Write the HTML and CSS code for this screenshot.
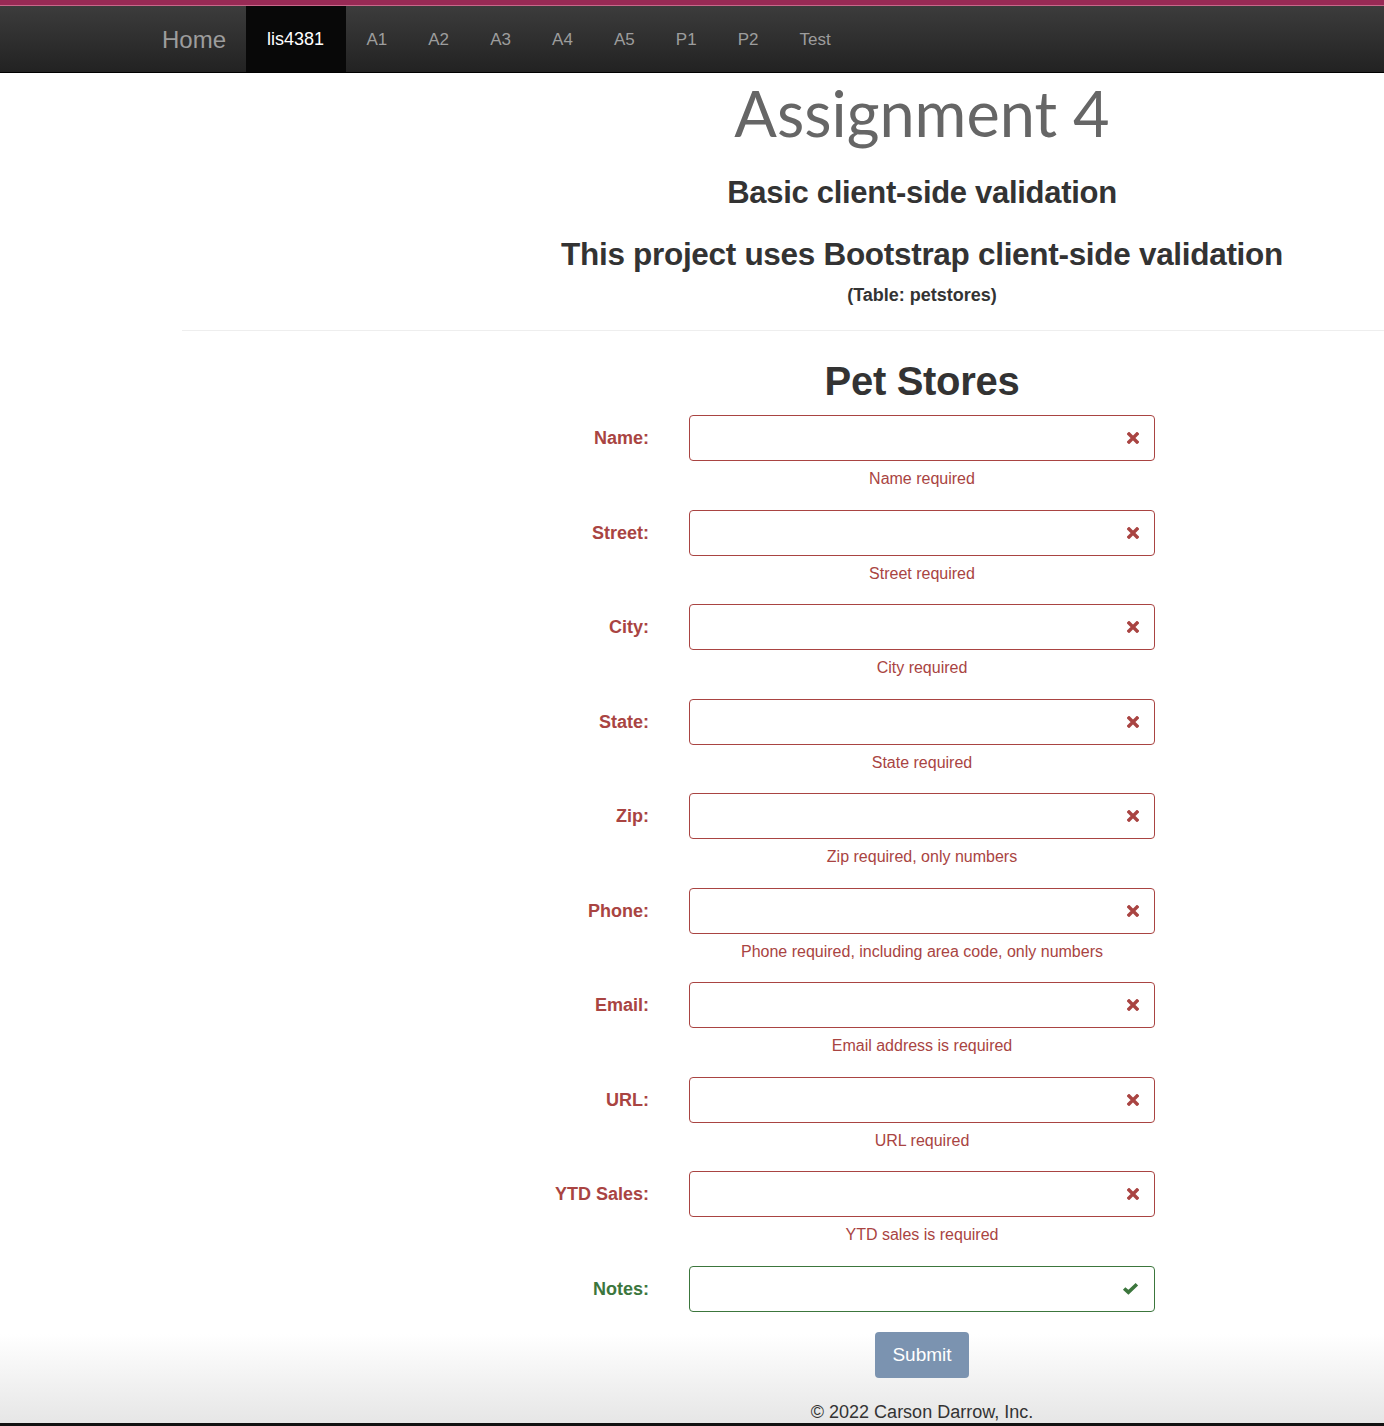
FILE: index.html
```html
<!DOCTYPE html>
<html lang="en">
<head>
<meta charset="utf-8">
<title>Assignment 4</title>
<link rel="stylesheet" href="styles.css">
</head>
<body>
<div class="topbar"></div>
<nav class="navbar">
  <a class="brand" href="#">Home</a>
  <ul class="nav">
    <li class="active"><a href="#">lis4381</a></li>
    <li><a href="#">A1</a></li>
    <li><a href="#">A2</a></li>
    <li><a href="#">A3</a></li>
    <li><a href="#">A4</a></li>
    <li><a href="#">A5</a></li>
    <li><a href="#">P1</a></li>
    <li><a href="#">P2</a></li>
    <li><a href="#">Test</a></li>
  </ul>
</nav>
<main class="page">
  <header class="intro">
    <h1 class="title">Assignment 4</h1>
    <h2 class="subtitle">Basic client-side validation</h2>
    <h3 class="lead">This project uses Bootstrap client-side validation</h3>
    <p class="table-note">(Table: petstores)</p>
  </header>
  <hr class="divider">
  <section class="form-section">
    <h2 class="form-title">Pet Stores</h2>
    <form class="form">
      <div class="row err"><label>Name:</label><div class="field"><span class="box"><span class="ico x"><svg viewBox="0 0 12 12"><path d="M2 2L10 10M10 2L2 10"/></svg></span></span><span class="help">Name required</span></div></div>
      <div class="row err"><label>Street:</label><div class="field"><span class="box"><span class="ico x"><svg viewBox="0 0 12 12"><path d="M2 2L10 10M10 2L2 10"/></svg></span></span><span class="help">Street required</span></div></div>
      <div class="row err"><label>City:</label><div class="field"><span class="box"><span class="ico x"><svg viewBox="0 0 12 12"><path d="M2 2L10 10M10 2L2 10"/></svg></span></span><span class="help">City required</span></div></div>
      <div class="row err"><label>State:</label><div class="field"><span class="box"><span class="ico x"><svg viewBox="0 0 12 12"><path d="M2 2L10 10M10 2L2 10"/></svg></span></span><span class="help">State required</span></div></div>
      <div class="row err"><label>Zip:</label><div class="field"><span class="box"><span class="ico x"><svg viewBox="0 0 12 12"><path d="M2 2L10 10M10 2L2 10"/></svg></span></span><span class="help">Zip required, only numbers</span></div></div>
      <div class="row err"><label>Phone:</label><div class="field"><span class="box"><span class="ico x"><svg viewBox="0 0 12 12"><path d="M2 2L10 10M10 2L2 10"/></svg></span></span><span class="help">Phone required, including area code, only numbers</span></div></div>
      <div class="row err"><label>Email:</label><div class="field"><span class="box"><span class="ico x"><svg viewBox="0 0 12 12"><path d="M2 2L10 10M10 2L2 10"/></svg></span></span><span class="help">Email address is required</span></div></div>
      <div class="row err"><label>URL:</label><div class="field"><span class="box"><span class="ico x"><svg viewBox="0 0 12 12"><path d="M2 2L10 10M10 2L2 10"/></svg></span></span><span class="help">URL required</span></div></div>
      <div class="row err"><label>YTD Sales:</label><div class="field"><span class="box"><span class="ico x"><svg viewBox="0 0 12 12"><path d="M2 2L10 10M10 2L2 10"/></svg></span></span><span class="help">YTD sales is required</span></div></div>
      <div class="row ok last"><label>Notes:</label><div class="field"><span class="box"><span class="ico v"><svg viewBox="0 0 16 12"><path d="M2 6L6 9.5L14 2"/></svg></span></span></div></div>
    </form>
  </section>
  <footer class="bottom">
    <div class="submit-wrap"><button class="submit" type="button">Submit</button></div>
    <p class="copy">© 2022 Carson Darrow, Inc.</p>
  </footer>
</main>
</body>
</html>
```

FILE: styles.css
```css
html, body {
  margin: 0;
  padding: 0;
}
body {
  font-family: "Liberation Sans", Arial, sans-serif;
  color: #333;
  background: #fff;
  overflow: hidden;
}
.topbar {
  height: 5px;
  background: #982a55;
  border-bottom: 1px solid #c9678a;
}
.navbar {
  height: 66px;
  background: linear-gradient(#3c3c3c, #222);
  border-bottom: 1px solid #000;
  display: flex;
  align-items: stretch;
  padding-left: 162px;
}
.brand {
  color: #9d9d9d;
  font-size: 24px;
  text-decoration: none;
  display: flex;
  align-items: center;
  padding-top: 1px;
  margin-right: 20px;
}
.nav {
  list-style: none;
  margin: 0;
  padding: 0;
  display: flex;
}
.nav li {
  display: flex;
}
.nav a {
  display: flex;
  align-items: center;
  padding: 1px 20.8px 0 20.3px;
  color: #9d9d9d;
  font-size: 17px;
  text-decoration: none;
}
.nav li.active a {
  background: #080808;
  color: #fff;
  font-size: 18px;
  padding: 1px 22px 0 21px;
}
.page {
  display: block;
}
.intro {
  margin-left: 460px;
  text-align: center;
}
.title {
  font-family: "Lato", "Open Sans", sans-serif;
  font-weight: 400;
  color: #666;
  font-size: 63px;
  line-height: 72px;
  margin: 4px 0 0;
  letter-spacing: 0;
}
.subtitle {
  font-size: 31px;
  font-weight: 600;
  margin: 24px 0 0;
  line-height: 40px;
  letter-spacing: -0.3px;
}
.lead {
  font-size: 31.5px;
  font-weight: 600;
  margin: 21px 0 0;
  line-height: 40px;
  letter-spacing: -0.3px;
}
.table-note {
  font-size: 18px;
  font-weight: 600;
  margin: 9px 0 0;
  line-height: 24px;
}
.divider {
  margin: 23px 0 0 182px;
  border: 0;
  border-top: 1px solid #eee;
}
.form-section {
  margin-left: 460px;
}
.form-title {
  text-align: center;
  font-size: 40px;
  font-weight: 600;
  margin: 26px 0 0;
  line-height: 48px;
  letter-spacing: -0.3px;
}
.form {
  margin-top: 10px;
  display: flex;
  flex-direction: column;
  gap: 14px;
}
.row {
  display: grid;
  grid-template-columns: 189px 466px;
  column-gap: 40px;
  height: 80.5px;
}
.row.last {
  height: 46px;
}
.row label {
  text-align: right;
  font-weight: 700;
  font-size: 18px;
  line-height: 46px;
}
.err label, .err .help { color: #a94442; }
.ok label { color: #3c763d; }
.field {
  display: flex;
  flex-direction: column;
}
.box {
  height: 44px;
  border: 1px solid #a94442;
  border-radius: 4px;
  display: flex;
  align-items: center;
  justify-content: flex-end;
  padding-right: 15px;
}
.ok .box { border-color: #3c763d; }
.ico svg {
  display: block;
  fill: none;
  stroke-linecap: square;
}
.ico.x svg {
  width: 12px;
  height: 12px;
  stroke: #a94442;
  stroke-width: 3.4px;
}
.ico.v svg {
  width: 17px;
  height: 13px;
  stroke: #3c763d;
  stroke-width: 3.4px;
  stroke-linecap: butt;
}
.help {
  text-align: center;
  font-size: 16px;
  line-height: 20px;
  margin-top: 8px;
}
.bottom {
  margin-top: 0;
  background: linear-gradient(#fff 0px, #fff 22px, #e6e6e6 100%);
  border-bottom: 3px solid #111;
  padding-left: 460px;
  text-align: center;
}
.submit-wrap {
  padding-top: 20px;
}
.submit {
  font-family: "Liberation Sans", Arial, sans-serif;
  background: #7b93b0;
  color: #fff;
  font-size: 19px;
  border: 0;
  border-radius: 4px;
  width: 94px;
  height: 46px;
  padding: 0;
}
.copy {
  margin: 23px 0 0;
  font-size: 18px;
  line-height: 22px;
  padding-bottom: 0;
}
```
